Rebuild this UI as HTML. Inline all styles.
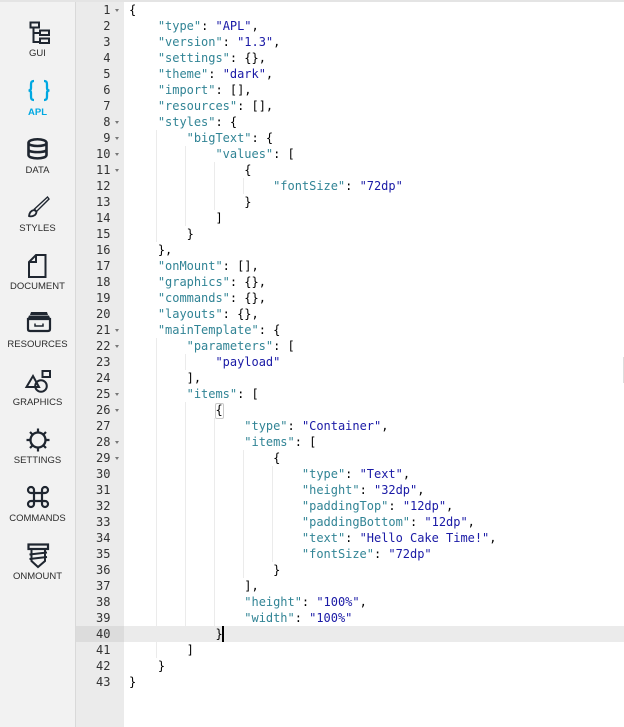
<!DOCTYPE html>
<html><head><meta charset="utf-8">
<style>
html,body{margin:0;padding:0;background:#fff}
body{width:624px;height:727px;position:relative;overflow:hidden}
#side{position:absolute;left:0;top:0;width:75px;height:727px;background:#f2f2f2;border-right:1px solid #d9d9d9}
#gut{position:absolute;left:76px;top:0;width:48px;height:727px;background:#ebebeb}
#top{position:absolute;left:0;top:0;width:624px;height:2px;background:#e4e4e4;z-index:5}
#ed{position:absolute;left:0;top:1px;width:624px;height:726px}
.lab{position:absolute;left:0;width:75px;text-align:center;font:9.5px/12px "Liberation Sans",sans-serif;color:#2b2b2b}
svg{position:absolute;left:0;top:0}
.n{position:absolute;left:76px;width:34.5px;text-align:right;font:12px/16px "DejaVu Sans Mono",monospace;color:#333}
.f{position:absolute;left:115px;width:0;height:0;border-left:2.5px solid transparent;border-right:2.5px solid transparent;border-top:3px solid #777}
.l{position:absolute;left:129px;white-space:pre;font:12px/16px "DejaVu Sans Mono",monospace;color:#000;letter-spacing:-.02px}
.k{color:#318495}.s{color:#1a1aa6}
.g{position:absolute;width:1px;background:#ebebeb}
</style></head><body>
<div id="top"></div>
<div id="side"></div>
<div id="gut"></div>
<div style="position:absolute;left:623px;top:357px;width:1px;height:26px;background:#ddd"></div>

<svg width="75" height="600" viewBox="0 0 75 600" fill="none" stroke="#1f2630" stroke-width="2">
<rect x="30.500" y="22.500" width="8.500" height="5"/><path d="M33.500 28V42H40M33.500 33H40"/><rect x="40" y="30.500" width="9" height="4.500"/><rect x="40" y="38.500" width="9" height="4.500"/>
<path stroke="#00a8e1" stroke-width="2.300" d="M34 81C31 81 31 83 31 85V88C31 90 30 90.500 28.500 90.500 30 90.500 31 91 31 93V96C31 98 31 100 34 100M44 81C47 81 47 83 47 85V88C47 90 48 90.500 49.500 90.500 48 90.500 47 91 47 93V96C47 98 47 100 44 100"/>
<path stroke-width="2.600" d="M28.500 143C28.500 138 46.500 138 46.500 143V155C46.500 159.500 28.500 159.500 28.500 155ZM28.500 143C28.500 147 46.500 147 46.500 143M28.500 149.500C28.500 153 46.500 153 46.500 149.500"/>
<path stroke-width="1.400" d="M34.500 209L47.500 197L49 199L36.500 211.500Z"/><path d="M34 210C31.500 210.500 29.500 212 29 216C31.500 217 33.500 216 35 215C36 214 36.500 213 36.500 211.500Z" stroke-width="1.800"/>
<path stroke-width="2" d="M36 255H45.500V277H29V262ZM36 255V262H29"/>
<path fill="#1f2630" stroke="none" d="M31 312H47L48 315H30ZM29 315.500H49L50 318H28Z"/>
<path stroke-width="2.200" d="M28 319H50V329C50 330.500 49 331 48 331H30C29 331 28 330.500 28 329Z"/><path stroke-width="1.500" d="M35 323.500V326H43V323.500"/>
<rect x="42.500" y="371" width="7.500" height="6"/><path stroke-width="2" d="M33 376L26.500 387H39Z"/><circle cx="41" cy="386" r="5.800" stroke-width="2"/>
<circle cx="38" cy="440" r="7.500" stroke-width="2.300"/><path stroke-width="2.200" d="M38 428.500V432.500M38 447.500V451.500M26.500 440H30.500M45.500 440H49.500M30 432L32.500 434.500M43.500 445.500L46 448M30 448L32.500 445.500M43.500 434.500L46 432"/>
<path stroke-width="2.200" d="M34 493V490A3 3 0 1 0 31 493H45A3 3 0 1 0 42 490V504A3 3 0 1 0 45 501H31A3 3 0 1 0 34 504Z"/>
<rect x="28.500" y="544.500" width="19.500" height="4.500" stroke-width="2.200"/><path stroke-width="2" d="M31.500 549V561L38 567L45 561V549M29.500 554.500L47 552.500M29.500 559L47 557"/>
</svg>

<div class="lab" style="top:48px">GUI</div>
<div class="lab" style="top:106px;color:#00a8e1;font-weight:bold;margin-top:1px">APL</div>
<div class="lab" style="top:165px">DATA</div>
<div class="lab" style="top:223px">STYLES</div>
<div class="lab" style="top:281px">DOCUMENT</div>
<div class="lab" style="top:339px">RESOURCES</div>
<div class="lab" style="top:397px">GRAPHICS</div>
<div class="lab" style="top:455px">SETTINGS</div>
<div class="lab" style="top:513px">COMMANDS</div>
<div class="lab" style="top:571px">ONMOUNT</div>

<div id="ed">
<div style="position:absolute;left:76px;top:625px;width:48px;height:16px;background:#dcdcdc"></div>
<div style="position:absolute;left:124px;top:625px;width:500px;height:16px;background:#ebebeb"></div>

<div class="n" style="top:1px">1</div><div class="n" style="top:17px">2</div><div class="n" style="top:33px">3</div><div class="n" style="top:49px">4</div><div class="n" style="top:65px">5</div><div class="n" style="top:81px">6</div><div class="n" style="top:97px">7</div><div class="n" style="top:113px">8</div><div class="n" style="top:129px">9</div><div class="n" style="top:145px">10</div><div class="n" style="top:161px">11</div><div class="n" style="top:177px">12</div><div class="n" style="top:193px">13</div><div class="n" style="top:209px">14</div><div class="n" style="top:225px">15</div><div class="n" style="top:241px">16</div><div class="n" style="top:257px">17</div><div class="n" style="top:273px">18</div><div class="n" style="top:289px">19</div><div class="n" style="top:305px">20</div><div class="n" style="top:321px">21</div><div class="n" style="top:337px">22</div><div class="n" style="top:353px">23</div><div class="n" style="top:369px">24</div><div class="n" style="top:385px">25</div><div class="n" style="top:401px">26</div><div class="n" style="top:417px">27</div><div class="n" style="top:433px">28</div><div class="n" style="top:449px">29</div><div class="n" style="top:465px">30</div><div class="n" style="top:481px">31</div><div class="n" style="top:497px">32</div><div class="n" style="top:513px">33</div><div class="n" style="top:529px">34</div><div class="n" style="top:545px">35</div><div class="n" style="top:561px">36</div><div class="n" style="top:577px">37</div><div class="n" style="top:593px">38</div><div class="n" style="top:609px">39</div><div class="n" style="top:625px">40</div><div class="n" style="top:641px">41</div><div class="n" style="top:657px">42</div><div class="n" style="top:673px">43</div>

<div class="f" style="top:8px"></div><div class="f" style="top:120px"></div><div class="f" style="top:136px"></div><div class="f" style="top:152px"></div><div class="f" style="top:168px"></div><div class="f" style="top:328px"></div><div class="f" style="top:344px"></div><div class="f" style="top:392px"></div><div class="f" style="top:408px"></div><div class="f" style="top:440px"></div><div class="f" style="top:456px"></div>

<div class="g" style="left:156px;top:129px;height:112px"></div>
<div class="g" style="left:156px;top:337px;height:320px"></div>
<div class="g" style="left:185px;top:145px;height:80px"></div>
<div class="g" style="left:185px;top:353px;height:16px"></div>
<div class="g" style="left:185px;top:401px;height:240px"></div>
<div class="g" style="left:214px;top:161px;height:48px"></div>
<div class="g" style="left:214px;top:417px;height:208px"></div>
<div class="g" style="left:243px;top:177px;height:16px"></div>
<div class="g" style="left:243px;top:449px;height:128px"></div>
<div class="g" style="left:272px;top:465px;height:96px"></div>

<div style="position:absolute;left:215px;top:402px;width:7px;height:14px;border:1px solid #c8c8c8;border-radius:2px"></div>
<div style="position:absolute;left:222px;top:625px;width:2px;height:16px;background:#000;z-index:3"></div>

<div class="l" style="top:1px">{</div>
<div class="l" style="top:17px">    <span class="k">"type"</span>: <span class="s">"APL"</span>,</div>
<div class="l" style="top:33px">    <span class="k">"version"</span>: <span class="s">"1.3"</span>,</div>
<div class="l" style="top:49px">    <span class="k">"settings"</span>: {},</div>
<div class="l" style="top:65px">    <span class="k">"theme"</span>: <span class="s">"dark"</span>,</div>
<div class="l" style="top:81px">    <span class="k">"import"</span>: [],</div>
<div class="l" style="top:97px">    <span class="k">"resources"</span>: [],</div>
<div class="l" style="top:113px">    <span class="k">"styles"</span>: {</div>
<div class="l" style="top:129px">        <span class="k">"bigText"</span>: {</div>
<div class="l" style="top:145px">            <span class="k">"values"</span>: [</div>
<div class="l" style="top:161px">                {</div>
<div class="l" style="top:177px">                    <span class="k">"fontSize"</span>: <span class="s">"72dp"</span></div>
<div class="l" style="top:193px">                }</div>
<div class="l" style="top:209px">            ]</div>
<div class="l" style="top:225px">        }</div>
<div class="l" style="top:241px">    },</div>
<div class="l" style="top:257px">    <span class="k">"onMount"</span>: [],</div>
<div class="l" style="top:273px">    <span class="k">"graphics"</span>: {},</div>
<div class="l" style="top:289px">    <span class="k">"commands"</span>: {},</div>
<div class="l" style="top:305px">    <span class="k">"layouts"</span>: {},</div>
<div class="l" style="top:321px">    <span class="k">"mainTemplate"</span>: {</div>
<div class="l" style="top:337px">        <span class="k">"parameters"</span>: [</div>
<div class="l" style="top:353px">            <span class="s">"payload"</span></div>
<div class="l" style="top:369px">        ],</div>
<div class="l" style="top:385px">        <span class="k">"items"</span>: [</div>
<div class="l" style="top:401px">            {</div>
<div class="l" style="top:417px">                <span class="k">"type"</span>: <span class="s">"Container"</span>,</div>
<div class="l" style="top:433px">                <span class="k">"items"</span>: [</div>
<div class="l" style="top:449px">                    {</div>
<div class="l" style="top:465px">                        <span class="k">"type"</span>: <span class="s">"Text"</span>,</div>
<div class="l" style="top:481px">                        <span class="k">"height"</span>: <span class="s">"32dp"</span>,</div>
<div class="l" style="top:497px">                        <span class="k">"paddingTop"</span>: <span class="s">"12dp"</span>,</div>
<div class="l" style="top:513px">                        <span class="k">"paddingBottom"</span>: <span class="s">"12dp"</span>,</div>
<div class="l" style="top:529px">                        <span class="k">"text"</span>: <span class="s">"Hello Cake Time!"</span>,</div>
<div class="l" style="top:545px">                        <span class="k">"fontSize"</span>: <span class="s">"72dp"</span></div>
<div class="l" style="top:561px">                    }</div>
<div class="l" style="top:577px">                ],</div>
<div class="l" style="top:593px">                <span class="k">"height"</span>: <span class="s">"100%"</span>,</div>
<div class="l" style="top:609px">                <span class="k">"width"</span>: <span class="s">"100%"</span></div>
<div class="l" style="top:625px">            }</div>
<div class="l" style="top:641px">        ]</div>
<div class="l" style="top:657px">    }</div>
<div class="l" style="top:673px">}</div>
</div>
</body></html>
